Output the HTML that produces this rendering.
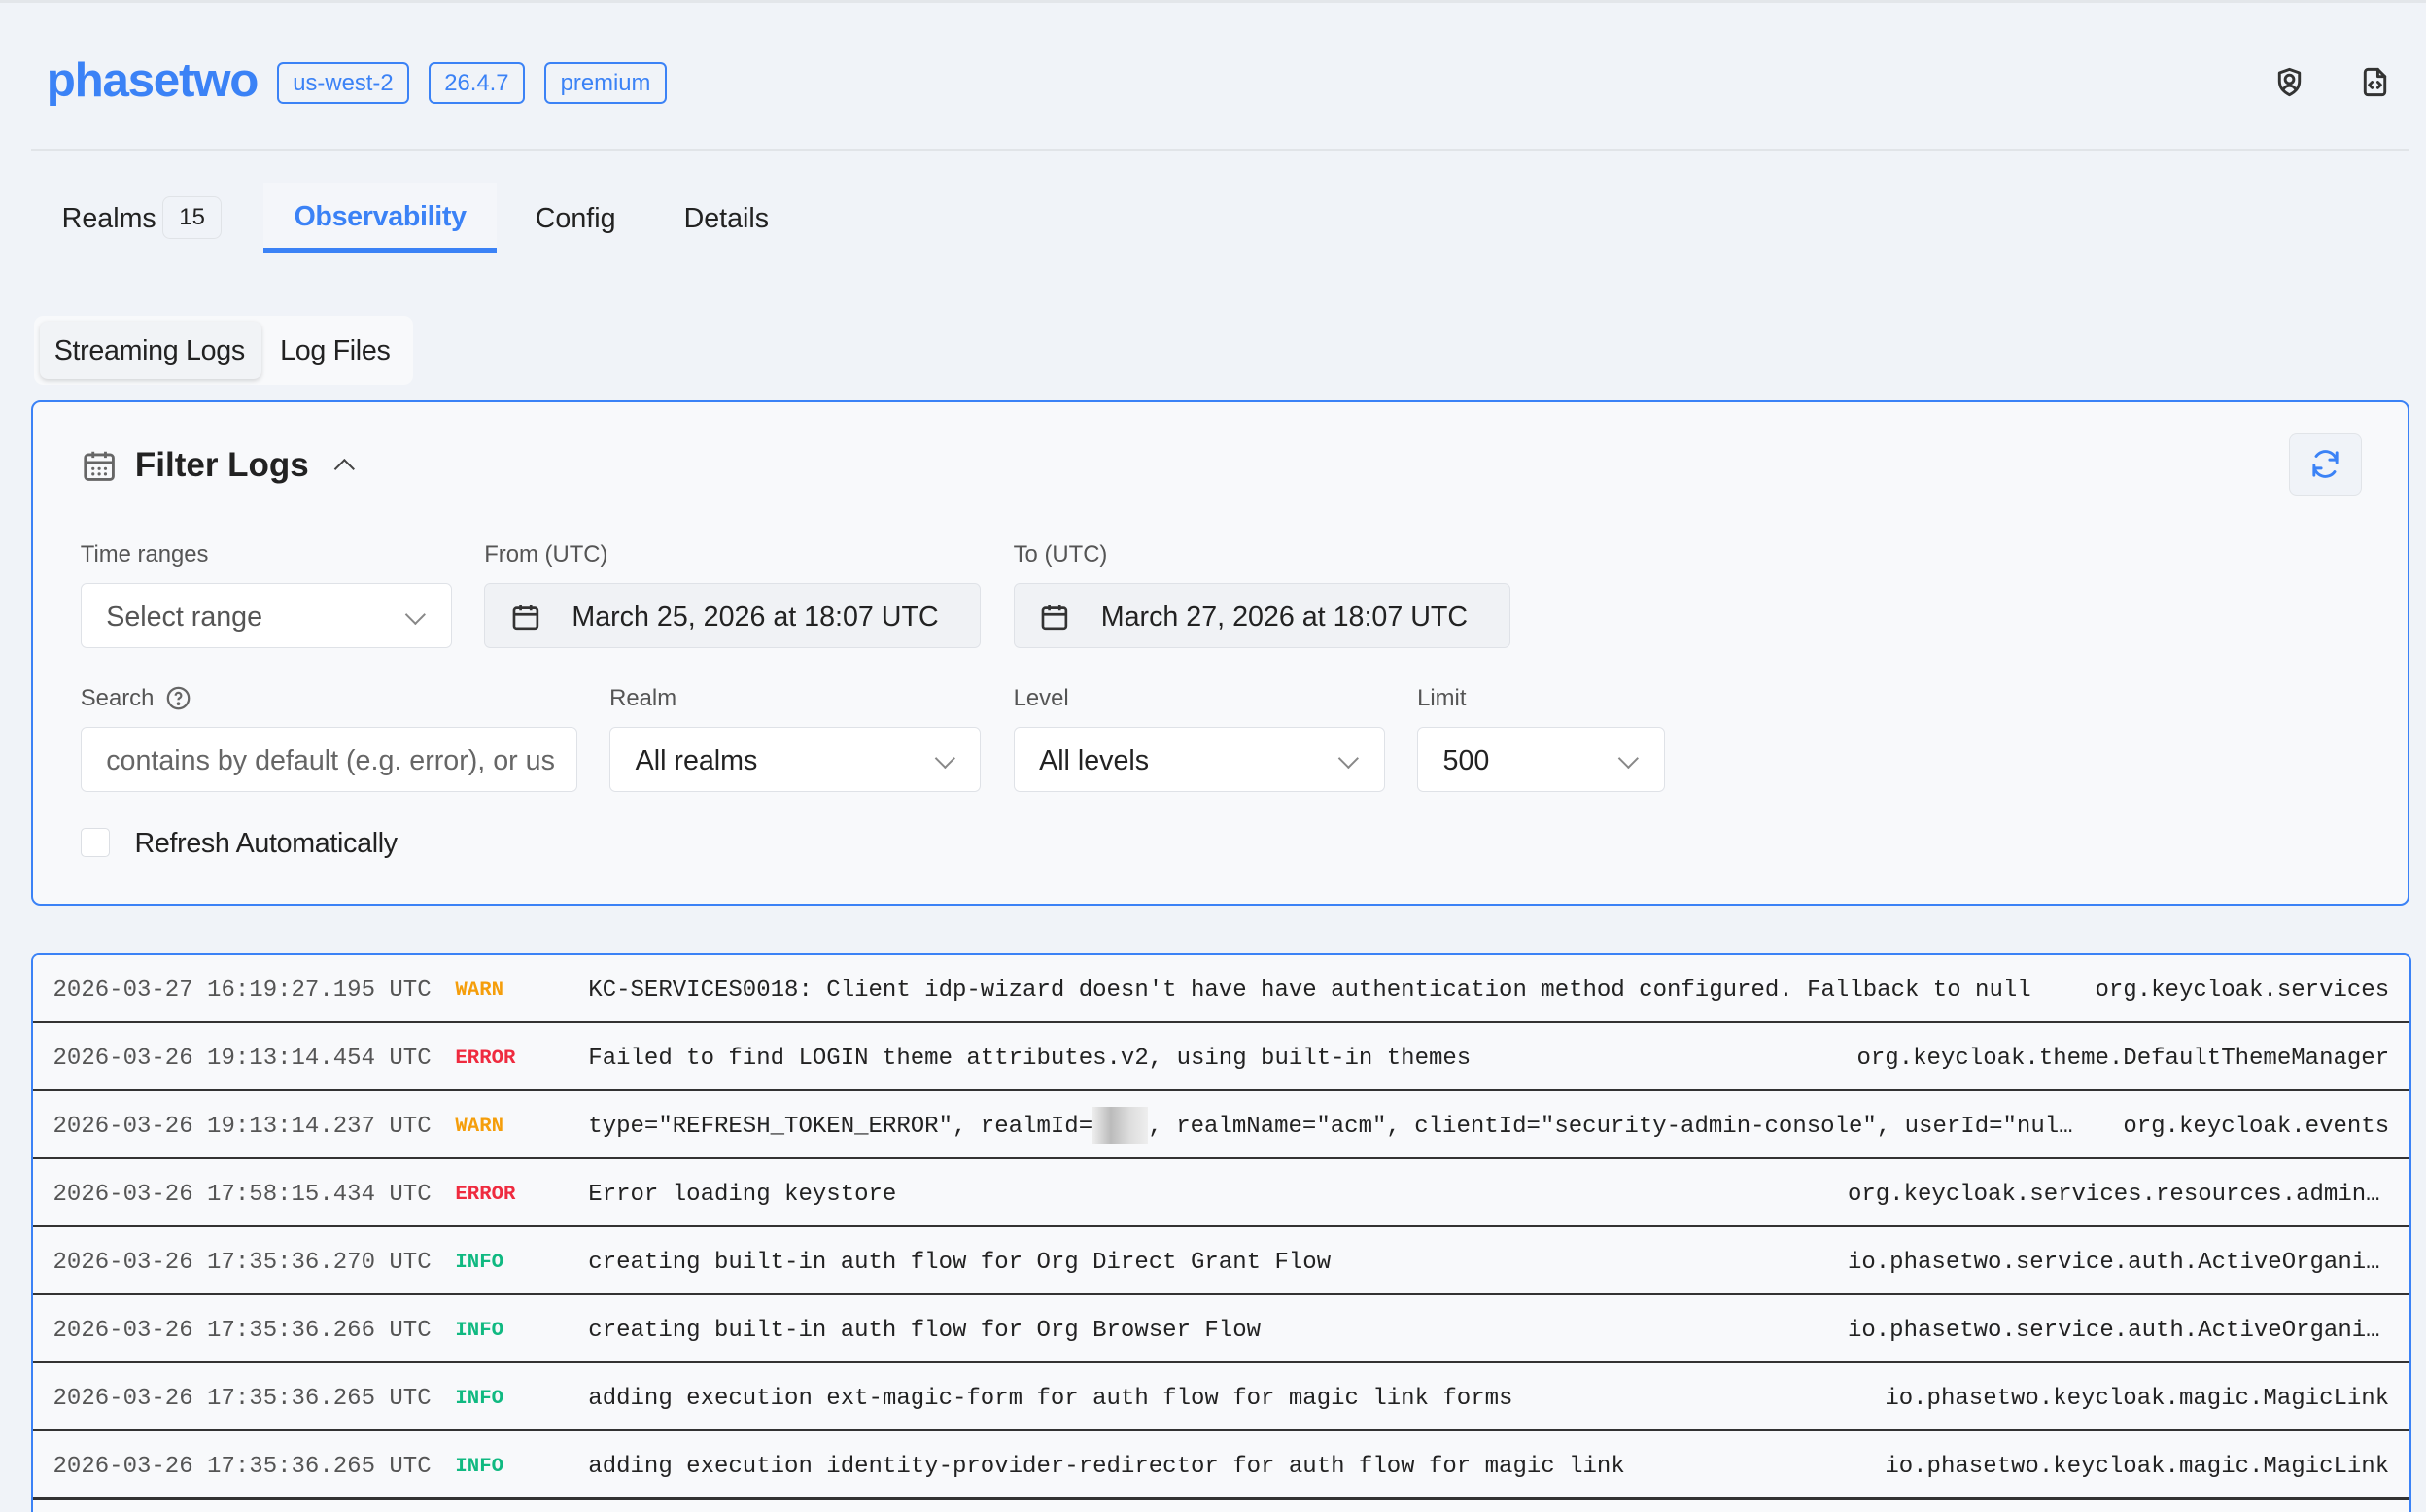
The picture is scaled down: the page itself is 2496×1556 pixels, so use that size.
<!DOCTYPE html>
<html><head><meta charset="utf-8"><style>
html{zoom:1.5918}
body{margin:0;width:1568px;height:969px;overflow:hidden;background:#f0f3f8;font-family:"Liberation Sans",sans-serif;color:#222;position:relative}
.a{position:absolute}
.badge{position:absolute;top:40px;height:25px;border:1.5px solid #3b82f6;border-radius:4px;color:#3b82f6;font-size:15px;line-height:25px;padding:0 9px}
.lbl{position:absolute;font-size:15px;color:#555}
.inp{position:absolute;height:42px;border:1px solid #dfe2e7;border-radius:4px;background:#fff;font-size:18px;line-height:43px;box-sizing:border-box;padding-left:16px;color:#222;overflow:hidden;white-space:nowrap}
.chev{position:absolute;right:18px;top:15px;width:8px;height:8px;border-right:1.6px solid #888;border-bottom:1.6px solid #888;transform:rotate(45deg)}
.row{position:absolute;left:0;right:0;height:43px;border-bottom:2px solid #333;font-family:"Liberation Mono",monospace;font-size:15.1px;line-height:46px;background:#f8f9fb}
.row span{position:absolute;white-space:nowrap}
.ts{left:13px;color:#555}.lv{left:273px;font-weight:bold;font-size:13px}.ms{left:359px;color:#222}.lg{right:13px;color:#222}
.W{color:#f59e0b}.E{color:#ef2b3f}.I{color:#10b981}
</style></head><body>
<div class="a" style="left:0;top:0;width:1568px;height:2px;background:#e3e6ea"></div>
<div class="a" style="left:30px;top:34px;font-size:31px;font-weight:bold;color:#3b82f6;letter-spacing:-0.8px">phasetwo</div>
<div class="badge" style="left:179px">us-west-2</div>
<div class="badge" style="left:277px">26.4.7</div>
<div class="badge" style="left:352px">premium</div>
<svg class="a" style="left:1469px;top:42px" width="22" height="22" viewBox="0 0 24 24" fill="none" stroke="#333" stroke-width="2" stroke-linecap="round" stroke-linejoin="round"><path d="M12 3l7 2.5v6c0 4.5-3 7.5-7 9.5-4-2-7-5-7-9.5v-6z"/><circle cx="12" cy="10" r="3"/><path d="M7.5 17.5c1-2 2.5-3 4.5-3s3.5 1 4.5 3"/></svg>
<svg class="a" style="left:1524px;top:42px" width="22" height="22" viewBox="0 0 24 24" fill="none" stroke="#333" stroke-width="2" stroke-linecap="round" stroke-linejoin="round"><path d="M14 3H7a2 2 0 0 0-2 2v14a2 2 0 0 0 2 2h10a2 2 0 0 0 2-2V8z"/><path d="M14 3v5h5"/><path d="M10 12l-2 2 2 2M14 12l2 2-2 2"/></svg>
<div class="a" style="left:20px;top:96px;width:1537px;height:1.5px;background:#e1e4e8"></div>
<div class="a" style="left:40px;top:131px;font-size:18px">Realms</div>
<div class="a" style="left:105px;top:127px;width:37px;height:26px;border:1px solid #e0e3e7;border-radius:5px;font-size:15px;line-height:26px;text-align:center">15</div>
<div class="a" style="left:170px;top:118px;width:151px;height:42px;background:#f4f6fa;border-bottom:3.5px solid #3b82f6"></div>
<div class="a" style="left:190px;top:130px;font-size:18px;font-weight:bold;color:#3b82f6;letter-spacing:-0.2px">Observability</div>
<div class="a" style="left:346px;top:131px;font-size:18px">Config</div>
<div class="a" style="left:442px;top:131px;font-size:18px">Details</div>
<div class="a" style="left:22px;top:204px;width:245px;height:45px;background:#f8f9fb;border-radius:6px"></div>
<div class="a" style="left:26px;top:208px;width:143px;height:37px;background:#f1f3f6;border-radius:5px;box-shadow:0 1px 3px rgba(0,0,0,.15)"></div>
<div class="a" style="left:35px;top:217px;font-size:18px;letter-spacing:-0.2px">Streaming Logs</div>
<div class="a" style="left:181px;top:217px;font-size:18px;letter-spacing:-0.2px">Log Files</div>

<div class="a" style="left:20px;top:259px;width:1535px;height:324px;border:1.5px solid #3b82f6;border-radius:6px;background:#f8f9fb">
<svg class="a" style="left:31px;top:29px" width="24" height="24" viewBox="0 0 24 24" fill="none" stroke="#666" stroke-width="1.8"><rect x="3" y="5" width="18" height="16" rx="2"/><path d="M3 10h18M8 3v4M16 3v4"/><g fill="#666" stroke="none"><circle cx="8" cy="14" r="1"/><circle cx="12" cy="14" r="1"/><circle cx="16" cy="14" r="1"/><circle cx="8" cy="17.5" r="1"/><circle cx="12" cy="17.5" r="1"/><circle cx="16" cy="17.5" r="1"/></g></svg>
<div class="a" style="left:66px;top:28px;font-size:22px;font-weight:bold">Filter Logs</div>
<div class="a" style="left:197px;top:38px;width:8px;height:8px;border-left:1.6px solid #444;border-top:1.6px solid #444;transform:rotate(45deg)"></div>
<div class="a" style="left:1458px;top:20px;width:46px;height:39px;background:#f0f3f8;border:1px solid #e1e4e8;border-radius:5px"></div>
<svg class="a" style="left:1471px;top:29px" width="22" height="22" viewBox="0 0 24 24" fill="none" stroke="#3b82f6" stroke-width="2" stroke-linecap="round"><path d="M20 11a8 8 0 0 0-14.5-4.5M4 13a8 8 0 0 0 14.5 4.5"/><path d="M20 4v5h-5M4 20v-5h5"/></svg>
</div>

<div class="lbl" style="left:52px;top:350px">Time ranges</div>
<div class="lbl" style="left:313px;top:350px">From (UTC)</div>
<div class="lbl" style="left:655px;top:350px">To (UTC)</div>
<div class="inp" style="left:52px;top:377px;width:240px;color:#555">Select range<div class="chev"></div></div>
<div class="inp" style="left:313px;top:377px;width:321px;background:#f0f2f5;padding-left:56px">March 25, 2026 at 18:07 UTC<svg class="a" style="left:16px;top:11px" width="20" height="20" viewBox="0 0 24 24" fill="none" stroke="#333" stroke-width="2"><rect x="3" y="5" width="18" height="16" rx="2"/><path d="M3 10h18M8 3v4M16 3v4"/></svg></div>
<div class="inp" style="left:655px;top:377px;width:321px;background:#f0f2f5;padding-left:56px">March 27, 2026 at 18:07 UTC<svg class="a" style="left:16px;top:11px" width="20" height="20" viewBox="0 0 24 24" fill="none" stroke="#333" stroke-width="2"><rect x="3" y="5" width="18" height="16" rx="2"/><path d="M3 10h18M8 3v4M16 3v4"/></svg></div>

<div class="lbl" style="left:52px;top:443px">Search</div>
<svg class="a" style="left:107px;top:443px" width="17" height="17" viewBox="0 0 24 24" fill="none" stroke="#666" stroke-width="2"><circle cx="12" cy="12" r="9.5"/><path d="M9.5 9.5a2.5 2.5 0 1 1 3.5 2.3c-.7.3-1 .9-1 1.7"/><circle cx="12" cy="17" r=".6" fill="#666"/></svg>
<div class="lbl" style="left:394px;top:443px">Realm</div>
<div class="lbl" style="left:655px;top:443px">Level</div>
<div class="lbl" style="left:916px;top:443px">Limit</div>
<div class="inp" style="left:52px;top:470px;width:321px;color:#666"><div style="width:290px;overflow:hidden">contains by default (e.g. error), or use</div></div>
<div class="inp" style="left:394px;top:470px;width:240px">All realms<div class="chev"></div></div>
<div class="inp" style="left:655px;top:470px;width:240px">All levels<div class="chev"></div></div>
<div class="inp" style="left:916px;top:470px;width:160px">500<div class="chev"></div></div>
<div class="a" style="left:52px;top:535px;width:18px;height:18px;border:1px solid #dcdfe4;border-radius:3px;background:#fff"></div>
<div class="a" style="left:87px;top:535px;font-size:18px;letter-spacing:-0.2px">Refresh Automatically</div>

<div class="a" style="left:20px;top:616px;width:1536px;height:360px;border:1.5px solid #3b82f6;border-bottom:none;border-radius:5px 5px 0 0;overflow:hidden;background:#f8f9fb">
<div class="row" style="top:0"><span class="ts">2026-03-27 16:19:27.195 UTC</span><span class="lv W">WARN</span><span class="ms">KC-SERVICES0018: Client idp-wizard doesn't have have authentication method configured. Fallback to null</span><span class="lg">org.keycloak.services</span></div>
<div class="row" style="top:44px"><span class="ts">2026-03-26 19:13:14.454 UTC</span><span class="lv E">ERROR</span><span class="ms">Failed to find LOGIN theme attributes.v2, using built-in themes</span><span class="lg">org.keycloak.theme.DefaultThemeManager</span></div>
<div class="row" style="top:88px"><span class="ts">2026-03-26 19:13:14.237 UTC</span><span class="lv W">WARN</span><span class="ms">type="REFRESH_TOKEN_ERROR", realmId=<span style="position:relative;display:inline-block;width:36px;height:24px;vertical-align:middle;background:linear-gradient(90deg,#eee,#bbb,#ddd,#eee)"></span>, realmName="acm", clientId="security-admin-console", userId="nul…</span><span class="lg">org.keycloak.events</span></div>
<div class="row" style="top:132px"><span class="ts">2026-03-26 17:58:15.434 UTC</span><span class="lv E">ERROR</span><span class="ms">Error loading keystore</span><span class="lg" style="right:19px">org.keycloak.services.resources.admin…</span></div>
<div class="row" style="top:176px"><span class="ts">2026-03-26 17:35:36.270 UTC</span><span class="lv I">INFO</span><span class="ms">creating built-in auth flow for Org Direct Grant Flow</span><span class="lg" style="right:19px">io.phasetwo.service.auth.ActiveOrgani…</span></div>
<div class="row" style="top:220px"><span class="ts">2026-03-26 17:35:36.266 UTC</span><span class="lv I">INFO</span><span class="ms">creating built-in auth flow for Org Browser Flow</span><span class="lg" style="right:19px">io.phasetwo.service.auth.ActiveOrgani…</span></div>
<div class="row" style="top:264px"><span class="ts">2026-03-26 17:35:36.265 UTC</span><span class="lv I">INFO</span><span class="ms">adding execution ext-magic-form for auth flow for magic link forms</span><span class="lg">io.phasetwo.keycloak.magic.MagicLink</span></div>
<div class="row" style="top:308px"><span class="ts">2026-03-26 17:35:36.265 UTC</span><span class="lv I">INFO</span><span class="ms">adding execution identity-provider-redirector for auth flow for magic link</span><span class="lg">io.phasetwo.keycloak.magic.MagicLink</span></div>
</div>
</body></html>
